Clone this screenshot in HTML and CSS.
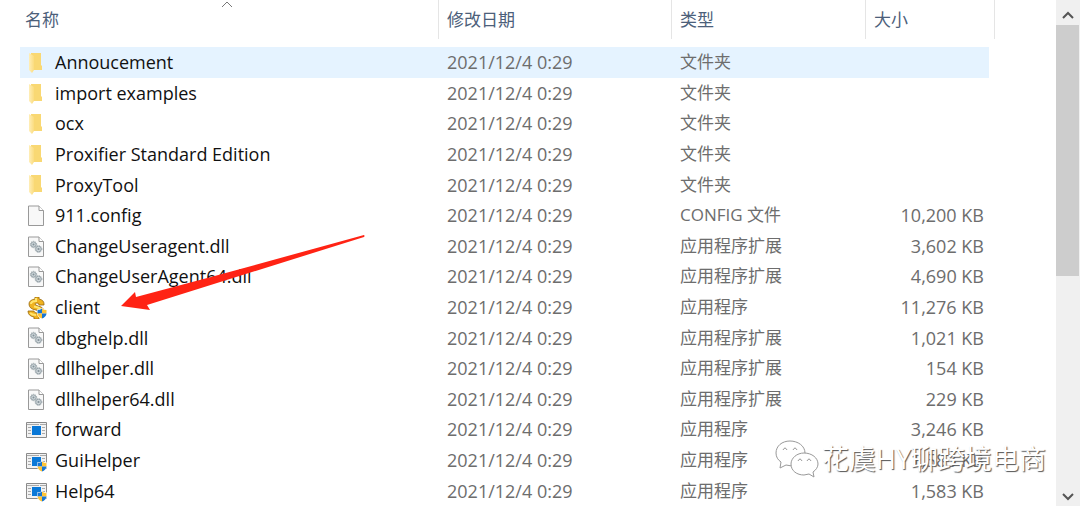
FILE: index.html
```html
<!DOCTYPE html>
<html lang="zh-CN">
  <head>
    <meta charset="UTF-8" />
    <meta name="viewport" content="width=device-width, initial-scale=1.0" />
    <title>文件列表</title>
    <link rel="stylesheet" href="styles.css">
  </head>

  <body>
    <!-- 图标 -->
    <svg class="defs" width="0" height="0">
      <defs>
        <linearGradient id="fold" x1="0" x2="1">
          <stop offset="0" stop-color="#ffeeb8" />
          <stop offset="1" stop-color="#fbdc7e" />
        </linearGradient>
        <symbol id="folder" viewBox="0 0 22 22">
          <path d="M5 1H15V13L16 14V18H5Z" fill="#f9d873" />
          <path d="M3 1L8 4V18L6 21L3 18Z" fill="url(#fold)" />
        </symbol>
        <symbol id="page" viewBox="0 0 22 22">
          <path d="M2.500 1H13L17.500 5.500V20.500H2.500Z" fill="#f8f8f8" stroke="#999" />
          <path d="M13 1V5.500H17.500" fill="#fff" stroke="#999" />
        </symbol>
        <symbol id="dll" viewBox="0 0 22 22">
          <use href="#page" />
          <circle cx="7.500" cy="8.500" r="2.600" fill="#cdd5d9" stroke="#98a4aa" />
          <circle cx="7.500" cy="8.500" r="3.200" fill="none" stroke="#98a4aa" stroke-dasharray="1 1" />
          <circle cx="7.500" cy="8.500" r="1" fill="#839198" />
          <circle cx="12.500" cy="13" r="2.800" fill="#cdd5d9" stroke="#98a4aa" />
          <circle cx="12.500" cy="13" r="3.400" fill="none" stroke="#98a4aa" stroke-dasharray="1 1" />
          <circle cx="12.500" cy="13" r="1.100" fill="#839198" />
        </symbol>
        <symbol id="shield" viewBox="0 0 10 11">
          <path d="M5 0Q7 1.500 10 1.500V5Q10 9 5 11Q0 9 0 5V1.500Q3 1.500 5 0Z" fill="#fff" />
          <path d="M5 .5V5.500H.5V2Q3 2 5 .5Z" fill="#1976d2" />
          <path d="M5 .5Q7 2 9.500 2V5.500H5Z" fill="#ffc435" />
          <path d="M.5 5.500H5V10.500Q1 9 .5 5.500Z" fill="#ffc435" />
          <path d="M5 5.500H9.500Q9 9 5 10.500Z" fill="#1976d2" />
        </symbol>
        <symbol id="app" viewBox="0 0 22 22">
          <path d="M.5 3.500H20.500V18.500H.5Z" fill="#f2f2f2" stroke="#8a8a8a" />
          <path d="M1 5.500H20" stroke="#aaa" stroke-dasharray="12 1" />
          <path d="M2 8.500H5M2 11.500H5M2 14.500H5M16 8.500H19M16 11.500H19M16 14.500H19" stroke="#aaa" />
          <rect x="6" y="7" width="9" height="9" fill="#0a78d7" />
        </symbol>
        <symbol id="admin" viewBox="0 0 22 22">
          <use href="#app" />
          <use href="#shield" x="11" y="11" width="10" height="11" />
        </symbol>
        <symbol id="dollar" viewBox="0 0 22 22">
          <path d="M9 0H13V2Q18 3 18 7V8H13Q13 6 11 6Q9 6 9 7Q9 8 12 9Q18 10 18 15Q18 19 13 20V22H8V20Q2 19 2 14H8Q8 16 11 16Q13 16 13 15Q13 14 10 13Q3 12 3 7Q3 3 9 2Z" fill="#f0b21f" stroke="#98680d" stroke-width=".8" />
          <path d="M10 1V4Q5 4 5 7M4 16Q6 18 10 18M8 9.500Q14 10.500 15 13" fill="none" stroke="#ffe56e" stroke-width="2" />
          <use href="#shield" x="11" y="11" width="10" height="11" />
        </symbol>
      </defs>
    </svg>

    <div class="explorer">
      <main class="files">
        <table>
          <colgroup>
            <col>
            <col class="col-date">
            <col class="col-type">
            <col class="col-size">
            <col class="col-gap">
          </colgroup>
          <thead>
            <tr>
              <th>
                <button>名称
                  <svg class="sort" width="12" height="7" viewBox="0 0 12 7"><path d="M1 6L6 1L11 6" /></svg>
                </button>
              </th>
              <th><button>修改日期</button></th>
              <th><button>类型</button></th>
              <th colspan="2"><button>大小</button></th>
            </tr>
          </thead>
          <tbody>
            <tr class="active"><td><svg><use href="#folder" /></svg>Annoucement</td><td>2021/12/4 0:29</td><td>文件夹</td><td></td></tr>
            <tr><td><svg><use href="#folder" /></svg>import examples</td><td>2021/12/4 0:29</td><td>文件夹</td><td></td></tr>
            <tr><td><svg><use href="#folder" /></svg>ocx</td><td>2021/12/4 0:29</td><td>文件夹</td><td></td></tr>
            <tr><td><svg><use href="#folder" /></svg>Proxifier Standard Edition</td><td>2021/12/4 0:29</td><td>文件夹</td><td></td></tr>
            <tr><td><svg><use href="#folder" /></svg>ProxyTool</td><td>2021/12/4 0:29</td><td>文件夹</td><td></td></tr>
            <tr><td><svg><use href="#page" /></svg>911.config</td><td>2021/12/4 0:29</td><td>CONFIG 文件</td><td>10,200 KB</td></tr>
            <tr><td><svg><use href="#dll" /></svg>ChangeUseragent.dll</td><td>2021/12/4 0:29</td><td>应用程序扩展</td><td>3,602 KB</td></tr>
            <tr><td><svg><use href="#dll" /></svg>ChangeUserAgent64.dll</td><td>2021/12/4 0:29</td><td>应用程序扩展</td><td>4,690 KB</td></tr>
            <tr><td><svg><use href="#dollar" /></svg>client</td><td>2021/12/4 0:29</td><td>应用程序</td><td>11,276 KB</td></tr>
            <tr><td><svg><use href="#dll" /></svg>dbghelp.dll</td><td>2021/12/4 0:29</td><td>应用程序扩展</td><td>1,021 KB</td></tr>
            <tr><td><svg><use href="#dll" /></svg>dllhelper.dll</td><td>2021/12/4 0:29</td><td>应用程序扩展</td><td>154 KB</td></tr>
            <tr><td><svg><use href="#dll" /></svg>dllhelper64.dll</td><td>2021/12/4 0:29</td><td>应用程序扩展</td><td>229 KB</td></tr>
            <tr><td><svg><use href="#app" /></svg>forward</td><td>2021/12/4 0:29</td><td>应用程序</td><td>3,246 KB</td></tr>
            <tr><td><svg><use href="#admin" /></svg>GuiHelper</td><td>2021/12/4 0:29</td><td>应用程序</td><td>1,583 KB</td></tr>
            <tr><td><svg><use href="#admin" /></svg>Help64</td><td>2021/12/4 0:29</td><td>应用程序</td><td>1,583 KB</td></tr>
          </tbody>
        </table>
      </main>

      <div class="scrollbar">
        <button aria-label="向上滚动"><svg width="12" height="9" viewBox="0 0 12 9"><path d="M1 7L6 2L11 7" /></svg></button>
        <div class="track"><div class="thumb"></div></div>
        <button aria-label="向下滚动"><svg width="12" height="9" viewBox="0 0 12 9"><path d="M1 2L6 7L11 2" /></svg></button>
      </div>

      <!-- 指向 client 的红色箭头 -->
      <svg class="arrow" width="244" height="76" viewBox="0 0 244 76">
        <path d="M243 0Q244 1 243 2L26 70L29 75L0 71L14 57L15 62L90 42Z" fill="#ff2314" />
      </svg>

      <!-- 水印 -->
      <div class="watermark">
        <svg width="44" height="38" viewBox="0 0 44 38">
          <path d="M15 1C7 1 1 6 1 13C1 17 3 20 6 22L5 28L11 25L17 26C24 26 30 20 30 13C30 6 23 1 15 1Z" />
          <path d="M29 13C22 13 16 18 16 24C16 31 22 35 29 35L34 34L39 37L38 32C41 30 43 27 43 24C43 18 37 13 29 13Z" />
          <path d="M8 10Q10 6 12 10M18 10Q20 6 22 10M23 21Q25 17 27 21M32 21Q34 17 36 21" />
        </svg>
        <span>花虞HY聊跨境电商</span>
      </div>
    </div>
  </body>
</html>
```
FILE: styles.css
```css
* {
  box-sizing: border-box;
}

body {
  margin: 0;
  background: #fff;
  font-family: "Open Sans", "Noto Sans CJK SC", sans-serif;
  font-size: 18px;
  line-height: 24px;
  color: #111;
}

button {
  padding: 0;
  border: none;
  background: none;
  font: inherit;
  color: inherit;
}

.defs {
  position: absolute;
}

.explorer {
  position: relative;
  display: flex;
  min-height: 100vh;
}

/* 文件表格 */
.files {
  flex: 1;
  padding: 0 61px 0 20px;
}

.files table {
  width: 100%;
  height: 100vh;
  table-layout: fixed;
  border-collapse: collapse;
}

.col-date {
  width: 233px;
}

.col-type {
  width: 194px;
}

.col-size {
  width: 123px;
}

.col-gap {
  width: 6px;
}

.files th {
  height: 47px;
  padding: 0;
  vertical-align: top;
  font-weight: normal;
}

.files th button {
  position: relative;
  display: block;
  width: 100%;
  height: 39px;
  padding-left: 8px;
  border-right: 1px solid #e5e5e5;
  font-size: 17px;
  color: #4c607a;
  text-align: left;
}

.files th:first-child button {
  padding-left: 5px;
}

.sort {
  position: absolute;
  top: 1px;
  left: 50%;
  margin-left: -8px;
  fill: none;
  stroke: #777;
}

.files td {
  padding: 0 0 0 8px;
  white-space: nowrap;
  color: #6d6d6d;
}

.files td:first-child {
  padding-left: 6px;
  color: #111;
}

.files td:nth-child(3) {
  font-size: 17px;
}

.files td:nth-child(4) {
  padding-right: 5px;
  text-align: right;
}

.files td svg {
  width: 22px;
  height: 22px;
  margin: -3px 7px 0 0;
  vertical-align: middle;
}

.files .active td {
  background: #e5f3ff;
}

/* 滚动条 */
.scrollbar {
  display: flex;
  flex-direction: column;
  width: 24px;
  background: #f0f0f0;
}

.scrollbar button {
  height: 25px;
}

.scrollbar path {
  fill: none;
  stroke: #555;
  stroke-width: 2;
}

.track {
  flex: 1;
}

.thumb {
  height: 55%;
  margin-right: 1px;
  background: #cdcdcd;
}

.arrow {
  position: absolute;
  top: 235px;
  left: 121px;
}

.watermark {
  position: absolute;
  right: 34px;
  bottom: 28px;
  display: flex;
  align-items: center;
  gap: 3px;
  font-size: 27px;
  line-height: 38px;
  color: #fff;
  text-shadow: 1px 1px 1px #555;
}

.watermark svg {
  fill: #fff;
  stroke: #999;
}
```
